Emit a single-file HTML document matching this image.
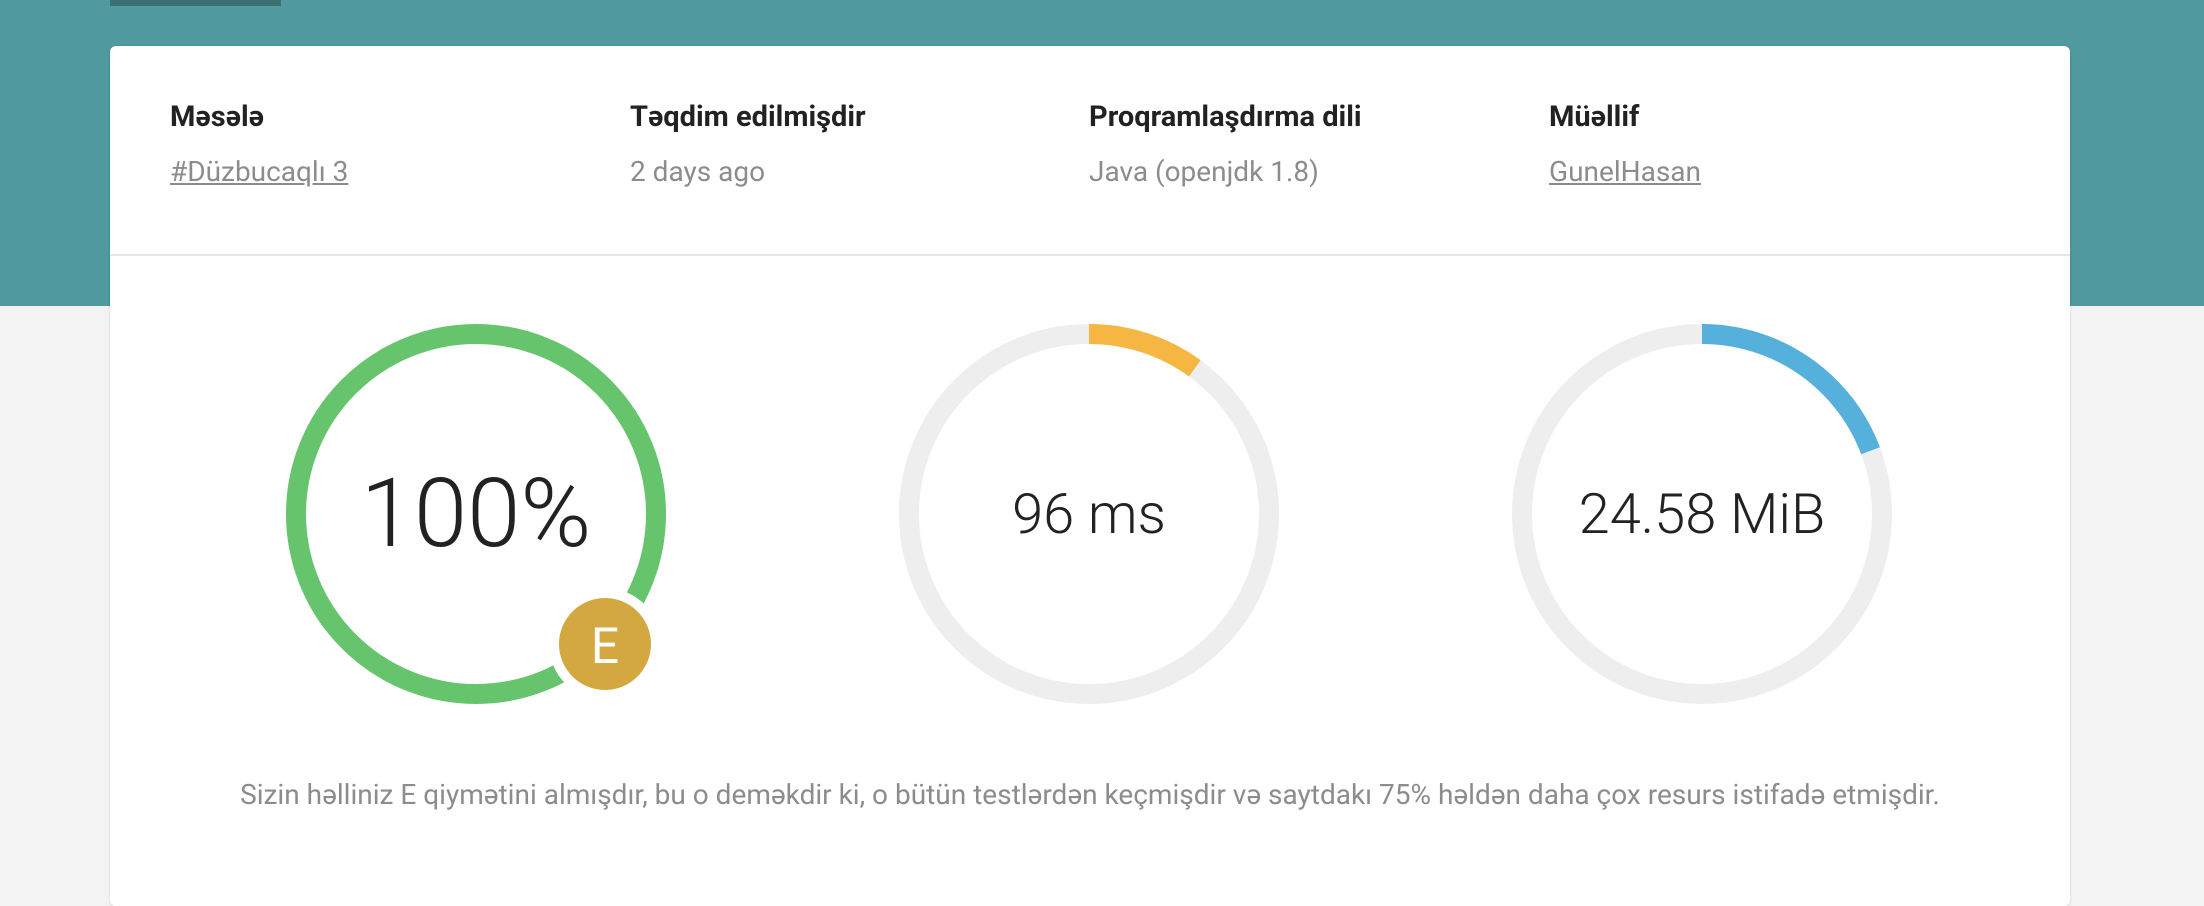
<!DOCTYPE html>
<html><head><meta charset="utf-8"><style>
body{margin:0;width:2204px;height:872px;background:#f3f3f3;position:relative;overflow:hidden;font-family:"Roboto","Liberation Sans",sans-serif;}
.teal{position:absolute;left:0;top:0;width:2204px;height:306px;background:#4f999f}
.tab{position:absolute;left:110px;top:0;width:171px;height:6px;background:#3e7073}
.card{position:absolute;left:110px;top:46px;width:1960px;height:860px;background:#fff;border-radius:6px;box-shadow:0 1px 3px rgba(0,0,0,.12)}
.h{position:absolute;top:100px;font-weight:bold;font-size:29px;color:#222}
.v{position:absolute;top:155px;font-size:28px;color:#8c8c8c}
.v.u{text-decoration:underline}
.div{position:absolute;left:110px;top:254px;width:1960px;height:2px;background:#e6e6e6}
.num{position:absolute;font-weight:300;color:#222;text-align:center;width:400px}
.txt{position:absolute;left:110px;width:1960px;top:778px;text-align:center;font-size:28px;color:#8c8c8c}
</style></head><body>
<div class="teal"></div><div class="tab"></div>
<div class="card"></div>
<div class="h" style="left:170px">Məsələ</div>
<div class="h" style="left:630px">Təqdim edilmişdir</div>
<div class="h" style="left:1089px">Proqramlaşdırma dili</div>
<div class="h" style="left:1549px">Müəllif</div>
<div class="v u" style="left:170px">#Düzbucaqlı 3</div>
<div class="v" style="left:630px">2 days ago</div>
<div class="v" style="left:1089px">Java (openjdk 1.8)</div>
<div class="v u" style="left:1549px">GunelHasan</div>
<div class="div"></div>
<svg width="2204" height="872" style="position:absolute;left:0;top:0">
<circle cx="476" cy="514" r="180" fill="none" stroke="#66c46c" stroke-width="20"/>
<circle cx="1089" cy="514" r="180" fill="none" stroke="#eeeeee" stroke-width="20"/>
<circle cx="1089" cy="514" r="180" fill="none" stroke="#f5b642" stroke-width="20" stroke-dasharray="113 2000" transform="rotate(-90 1089 514)"/>
<circle cx="1702" cy="514" r="180" fill="none" stroke="#eeeeee" stroke-width="20"/>
<circle cx="1702" cy="514" r="180" fill="none" stroke="#56b0dc" stroke-width="20" stroke-dasharray="218 2000" transform="rotate(-90 1702 514)"/>
<circle cx="605" cy="644" r="56" fill="#fff"/>
<circle cx="605" cy="644" r="46" fill="#d4a840"/>
<text x="605" y="663" text-anchor="middle" font-family="Roboto,Liberation Sans,sans-serif" font-size="50" fill="#fff">E</text>
</svg>
<div class="num" style="left:276px;top:458px;font-size:96px;line-height:112px">100%</div>
<div class="num" style="left:889px;top:481px;font-size:56px;line-height:66px">96 ms</div>
<div class="num" style="left:1502px;top:481px;font-size:56px;line-height:66px">24.58 MiB</div>
<div class="txt">Sizin həlliniz E qiymətini almışdır, bu o deməkdir ki, o bütün testlərdən keçmişdir və saytdakı 75% həldən daha çox resurs istifadə etmişdir.</div>
</body></html>
